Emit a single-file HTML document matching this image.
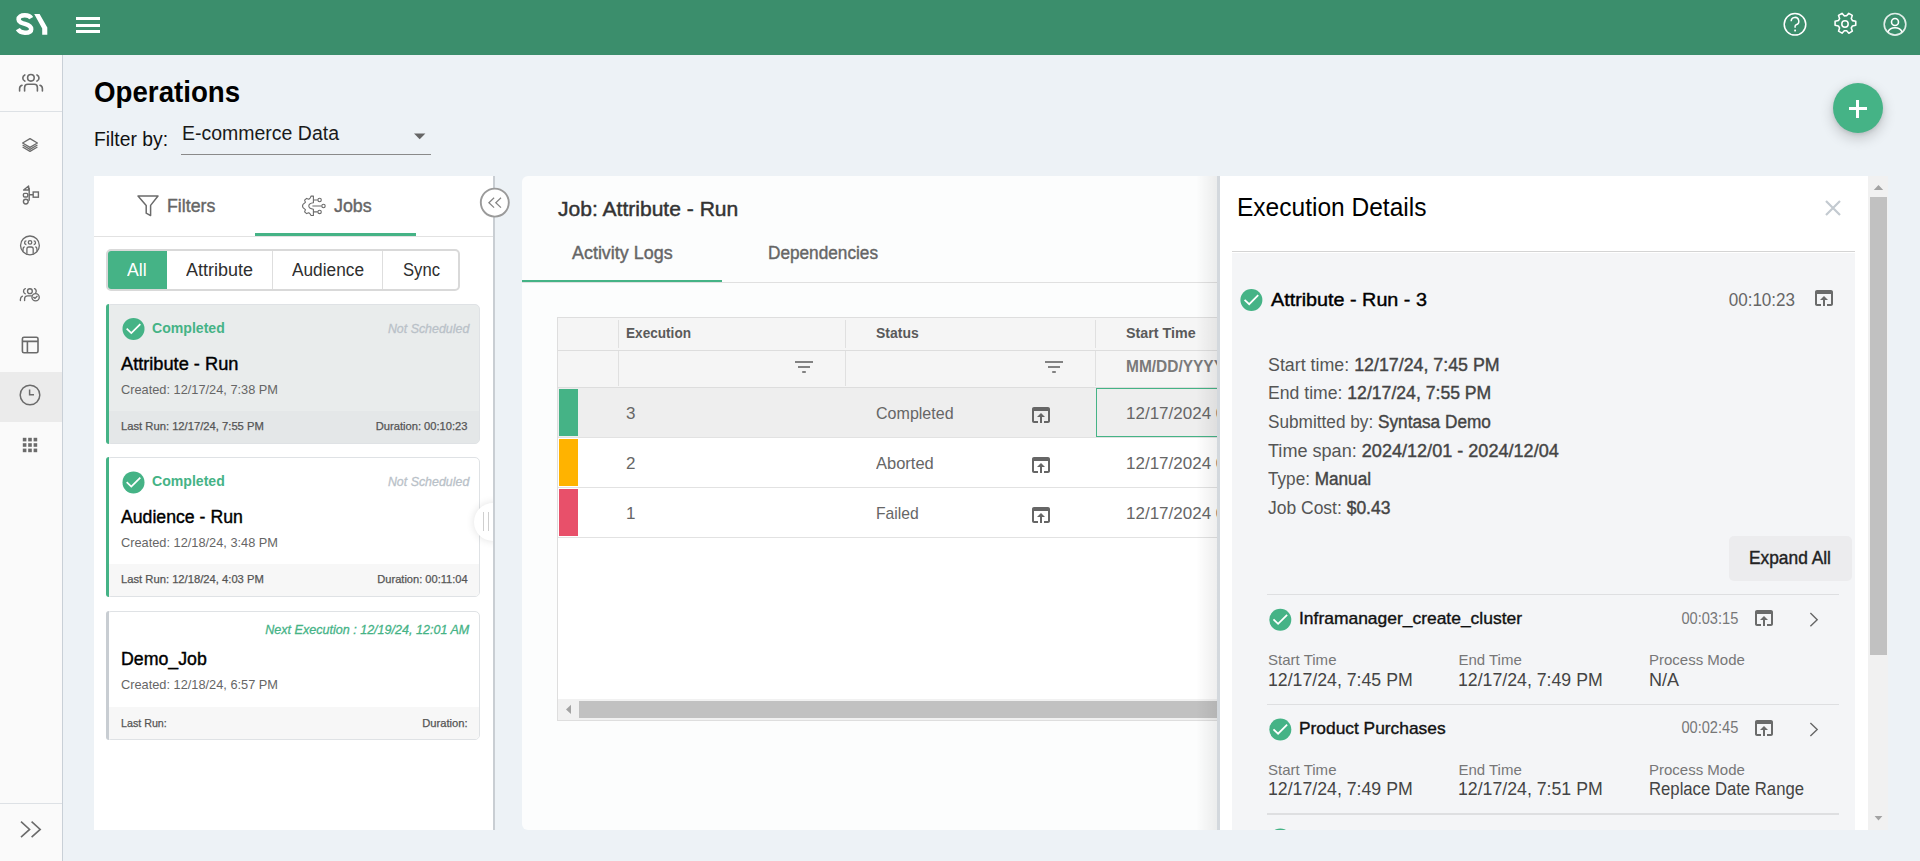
<!DOCTYPE html><html><head><meta charset="utf-8"><style>

*{box-sizing:border-box;margin:0;padding:0}
html,body{width:1920px;height:861px;overflow:hidden}
body{font-family:"Liberation Sans",sans-serif;background:#edf2f6;position:relative;color:#000}
.a{position:absolute}
.t{position:absolute;line-height:1;white-space:nowrap}
svg{position:absolute;overflow:visible}

</style></head><body>
<div class="a" style="left:0px;top:0px;width:1920px;height:55px;background:#3b8e6c"></div>
<svg style="left:0;top:0" width="60" height="55" viewBox="0 0 60 55">
<path d="M31.20 18.11 C30.00 15.90 27.60 15.35 24.80 15.35 C21.00 15.35 18.60 16.91 18.60 19.40 C18.60 22.16 21.60 22.98 24.90 23.90 C28.60 24.92 31.20 26.11 31.20 29.15 C31.20 31.91 28.40 32.64 24.90 32.64 C21.60 32.64 19.20 31.54 17.80 29.15" fill="none" stroke="#fff" stroke-width="4.5"/>
<path d="M34.2 14 L39.6 14 L47.3 27.6 L47.3 34.8 L42.2 34.8 L42.2 28.6 Z" fill="#fff"/>
</svg>
<div class="a" style="left:75.5px;top:17px;width:24px;height:3px;background:#fff"></div>
<div class="a" style="left:75.5px;top:23.5px;width:24px;height:3px;background:#fff"></div>
<div class="a" style="left:75.5px;top:30px;width:24px;height:3px;background:#fff"></div>
<svg style="left:1783px;top:12px" width="24" height="24" viewBox="0 0 24 24" fill="none" stroke="#fff" stroke-width="1.5">
<circle cx="12" cy="12.3" r="10.8"/>
<path d="M8.2 9.3 a3.8 3.8 0 1 1 5 3.5 c-0.7 .3 -1.1 .8 -1.1 1.5 v1.5"/>
<rect x="11.2" y="17.6" width="1.8" height="1.8" fill="#fff" stroke="none"/>
</svg>
<svg style="left:1833px;top:12.3px" width="24" height="24" viewBox="0 0 24 24" fill="none" stroke="#fff" stroke-width="1.5" stroke-linejoin="round">
<path transform="translate(12 12) scale(1.06) rotate(30) translate(-12 -12)" d="M10.1 1.5h3.8l.7 3.1 1.9 1.1 3-1 1.9 3.3-2.4 2.1v2.2l2.4 2.1-1.9 3.3-3-1-1.9 1.1-.7 3.1h-3.8l-.7-3.1-1.9-1.1-3 1-1.9-3.3 2.4-2.1v-2.2l-2.4-2.1 1.9-3.3 3 1 1.9-1.1z"/>
<circle cx="12" cy="12" r="3.2"/>
</svg>
<svg style="left:1883px;top:12px" width="24" height="24" viewBox="0 0 24 24" fill="none" stroke="#fff" stroke-width="1.6">
<circle cx="12" cy="12.3" r="10.8" stroke-opacity=".85"/>
<circle cx="12" cy="10" r="3.5"/>
<path d="M4.8 20.2 C6 17.2 8.6 15.7 12 15.7 C15.4 15.7 18 17.2 19.2 20.2"/>
</svg>
<div class="a" style="left:0px;top:55px;width:62px;height:806px;background:#fafafa"></div>
<div class="a" style="left:62px;top:55px;width:1.4px;height:806px;background:#c9d0d7"></div>
<div class="a" style="left:0px;top:111px;width:62px;height:1px;background:#dde1e5"></div>
<div class="a" style="left:0px;top:372px;width:62px;height:50px;background:#ebebeb"></div>
<div class="a" style="left:0px;top:803px;width:62px;height:1px;background:#dde1e5"></div>
<svg style="left:0;top:55px" width="62" height="60" fill="none" stroke="#6b6b6b" stroke-width="1.6" stroke-linecap="round">
<circle cx="30.9" cy="22.8" r="3.3"/>
<path d="M24.8 19.9 A3.4 3.4 0 0 0 24.8 26.1 M37 19.9 A3.4 3.4 0 0 1 37 26.1"/>
<path d="M24.6 36 v-3.6 a3.2 3.2 0 0 1 3.2 -3.2 h6.4 a3.2 3.2 0 0 1 3.2 3.2 v3.6"/>
<path d="M19.6 36 v-2.6 a3.4 3.4 0 0 1 2.4 -3.2 M42.4 36 v-2.6 a3.4 3.4 0 0 0 -2.4 -3.2"/>
</svg>
<svg style="left:0;top:130px" width="62" height="30" fill="none" stroke="#6b6b6b" stroke-width="1.3" stroke-linejoin="round">
<path d="M30 8.6 L37.4 13 L30 17.4 L22.6 13 Z" fill="#fafafa"/>
<path d="M22.6 15 L30 19.4 L37.4 15"/>
<path d="M22.6 17 L30 21.4 L37.4 17"/>
</svg>
<svg style="left:0;top:180px" width="62" height="30" fill="none" stroke="#6b6b6b" stroke-width="1.4">
<path d="M23.6 10 L28.6 10 L28.6 6 Z" stroke-linejoin="round"/>
<rect x="23.4" y="13.4" width="4.4" height="3.6" rx="1.2"/>
<circle cx="25.8" cy="21.6" r="2.4"/>
<path d="M29.2 7.8 V20.8 M29.2 14.8 H33"/>
<rect x="33.2" y="12" width="5.2" height="5.2"/>
</svg>
<svg style="left:0;top:225px" width="62" height="40" fill="none" stroke="#6b6b6b" stroke-width="1.3">
<circle cx="29.95" cy="20.4" r="9.4"/>
<circle cx="30.05" cy="17.4" r="1.75"/>
<path d="M26.4 15.9 A1.8 1.8 0 0 0 26.4 19.5 M33.7 15.9 A1.8 1.8 0 0 1 33.7 19.5"/>
<path d="M26.9 28.8 V24 a2 2 0 0 1 2 -2 h2.3 a2 2 0 0 1 2 2 V28.8"/>
<path d="M24.6 21.6 a3 3 0 0 0 -1.6 2.6 V26.6 M35.4 21.6 a3 3 0 0 1 1.6 2.6 V26.6"/>
</svg>
<svg style="left:0;top:275px" width="62" height="40" fill="none" stroke="#6b6b6b" stroke-width="1.35" stroke-linecap="round">
<circle cx="29.9" cy="16.15" r="2.4"/>
<path d="M25.3 13.6 A2.78 2.78 0 0 0 25.3 18.8 M34.5 13.6 A2.78 2.78 0 0 1 35.8 17.6"/>
<path d="M24.6 25.6 V23.8 a3 3 0 0 1 3 -3 H31.4"/>
<path d="M22.4 21.2 a3.5 3.5 0 0 0 -2 3 V25.6"/>
<circle cx="35.6" cy="22.25" r="3.65" fill="#fafafa"/>
<path d="M33.7 22.4 L35 23.4 L37.1 21.3"/>
</svg>
<svg style="left:0;top:330px" width="62" height="30" fill="none" stroke="#6b6b6b" stroke-width="1.6">
<rect x="22.4" y="7.2" width="15.6" height="15.6" rx="1.6"/>
<path d="M22.4 11.4 H38 M27.4 11.4 V22.8"/>
</svg>
<svg style="left:0;top:375px" width="62" height="40" fill="none" stroke="#6b6b6b" stroke-width="1.5">
<circle cx="30" cy="20" r="9.8"/>
<path d="M29.6 14.6 V19.8 H34"/>
</svg>
<svg style="left:0;top:430px" width="62" height="30" fill="#6b6b6b"><rect x="22.8" y="7.8" width="3.6" height="3.6"/><rect x="22.8" y="13.2" width="3.6" height="3.6"/><rect x="22.8" y="18.6" width="3.6" height="3.6"/><rect x="28.2" y="7.8" width="3.6" height="3.6"/><rect x="28.2" y="13.2" width="3.6" height="3.6"/><rect x="28.2" y="18.6" width="3.6" height="3.6"/><rect x="33.6" y="7.8" width="3.6" height="3.6"/><rect x="33.6" y="13.2" width="3.6" height="3.6"/><rect x="33.6" y="18.6" width="3.6" height="3.6"/></svg>
<svg style="left:0;top:815px" width="62" height="30" fill="none" stroke="#6b6b6b" stroke-width="1.6">
<path d="M21 6.6 L29.6 14.4 L21 22.2 M31.6 6.6 L40.2 14.4 L31.6 22.2"/>
</svg>
<div id="t0" class="t" style="left:94.40px;transform-origin:0 0;top:76.51px;font-size:30px;font-weight:700;color:#000;transform:scaleX(0.9231);">Operations</div>
<div id="t1" class="t" style="left:94.40px;transform-origin:0 0;top:129.07px;font-size:20px;font-weight:400;color:#111;transform:scaleX(0.9650);">Filter by:</div>
<div id="t2" class="t" style="left:182.00px;transform-origin:0 0;top:123.07px;font-size:20px;font-weight:400;color:#1a1a1a;transform:scaleX(0.9742);">E-commerce Data</div>
<div class="a" style="left:181px;top:154px;width:250px;height:1.2px;background:#8a8a8a"></div>
<svg style="left:0;top:0" width="1" height="1"><path d="M414 133.4 L425.4 133.4 L419.7 139.2 Z" fill="#666"/></svg>
<div class="a" style="left:1833px;top:83px;width:50px;height:50px;border-radius:50%;background:#45b386;box-shadow:0 5px 14px rgba(0,0,0,.2),0 1px 4px rgba(0,0,0,.1)"></div>
<div class="a" style="left:1848.5px;top:107.4px;width:18.4px;height:2.6px;background:#fff"></div>
<div class="a" style="left:1856.4px;top:99.5px;width:2.6px;height:18.4px;background:#fff"></div>
<div class="a" style="left:94px;top:176px;width:399px;height:654px;background:#fff"></div>
<div class="a" style="left:493px;top:176px;width:2.4px;height:654px;background:#c9ced3"></div>
<svg style="left:0;top:0" width="1" height="1" fill="none" stroke="#6b6b6b" stroke-width="1.5" stroke-linejoin="round">
<path d="M138 196 H158 L150.6 205.4 V215.6 L146.2 213.2 V205.4 Z"/>
</svg>
<div id="t3" class="t" style="left:167.30px;transform-origin:0 0;top:196.96px;font-size:18px;font-weight:400;color:#666;-webkit-text-stroke:0.40px #666;transform:scaleX(0.9857);">Filters</div>
<svg style="left:0;top:0" width="1" height="1" fill="none" stroke="#6b6b6b" stroke-width="1.1" stroke-linejoin="round">
<path d="M313.4 196.1 L313.4 202.8 C310.4 203.2 308.8 204.4 308.8 206.0 C308.8 207.6 310.4 208.8 313.4 209.3 L313.4 215.5 L311.1 215.5 L310.3 214.2 L308.8 212.7 L306.6 213.6 L304.6 211.9 L305.4 209.7 L303.0 207.6 L302.5 206.0 L303.0 204.4 L305.4 202.3 L304.6 200.1 L306.6 198.4 L308.8 199.3 L310.3 197.8 L311.1 196.1 Z"/>
<path d="M313.4 200 H317.8 M312.4 206 H321.6 M313.4 211.9 H317.8"/>
<circle cx="319.6" cy="200" r="1.7"/>
<circle cx="323.5" cy="206" r="1.7"/>
<circle cx="319.6" cy="211.9" r="1.7"/>
</svg>
<div id="t4" class="t" style="left:333.80px;transform-origin:0 0;top:196.96px;font-size:18px;font-weight:400;color:#666;-webkit-text-stroke:0.40px #666;transform:scaleX(0.9913);">Jobs</div>
<div class="a" style="left:94px;top:236px;width:399px;height:1px;background:#e2e2e2"></div>
<div class="a" style="left:255px;top:233px;width:161px;height:3px;background:#45b386"></div>
<div class="a" style="left:106px;top:249px;width:353.5px;height:42px;border:2px solid #d9d9d9;border-radius:5px;background:#fff"></div>
<div class="a" style="left:108px;top:251px;width:58.5px;height:38px;background:#45b386;border-radius:3px 0 0 3px"></div>
<div class="a" style="left:272.3px;top:251px;width:1px;height:38px;background:#dedede"></div>
<div class="a" style="left:382.3px;top:251px;width:1px;height:38px;background:#dedede"></div>
<div id="t5" class="t" style="left:127.00px;transform-origin:0 0;top:261.06px;font-size:18px;font-weight:400;color:#fff;transform:scaleX(0.9792);">All</div>
<div id="t6" class="t" style="left:185.80px;transform-origin:0 0;top:261.06px;font-size:18px;font-weight:400;color:#2e2e2e;transform:scaleX(0.9978);">Attribute</div>
<div id="t7" class="t" style="left:291.50px;transform-origin:0 0;top:261.06px;font-size:18px;font-weight:400;color:#2e2e2e;transform:scaleX(0.9592);">Audience</div>
<div id="t8" class="t" style="left:402.50px;transform-origin:0 0;top:261.06px;font-size:18px;font-weight:400;color:#2e2e2e;transform:scaleX(0.9243);">Sync</div>
<div class="a" style="left:106px;top:303.5px;width:374px;height:140px;background:#e9ecec;border:1px solid #dfe2e5;border-radius:5px;overflow:hidden"></div>
<div class="a" style="left:107px;top:410.5px;width:372px;height:32px;background:#e4e7e8;border-radius:0 0 4px 4px"></div>
<div class="a" style="left:106px;top:303.5px;width:3.2px;height:140px;background:#45b386;border-radius:5px 0 0 5px"></div>
<svg style="left:0;top:0" width="1" height="1"><circle cx="133.5" cy="328.9" r="11" fill="#45b386"/>
<path d="M126.68 328.68 L131.30 333.08 L140.32 324.06" fill="none" stroke="#fff" stroke-width="1.76"/></svg>
<div id="t9" class="t" style="left:152.20px;transform-origin:0 0;top:319.70px;font-size:15px;font-weight:700;color:#45b386;transform:scaleX(0.9392);">Completed</div>
<div id="t10" class="t" style="right:1450.80px;transform-origin:100% 0;top:321.70px;font-size:13px;font-weight:400;color:#b9c1c8;-webkit-text-stroke:0.29px #b9c1c8;font-style:italic;transform:scaleX(0.9545);">Not Scheduled</div>
<div id="t11" class="t" style="left:121.20px;transform-origin:0 0;top:354.96px;font-size:18px;font-weight:400;color:#000;-webkit-text-stroke:0.40px #000;transform:scaleX(1.0115);">Attribute - Run</div>
<div id="t12" class="t" style="left:121.20px;transform-origin:0 0;top:382.60px;font-size:13px;font-weight:400;color:#666;transform:scaleX(0.9830);">Created: 12/17/24, 7:38 PM</div>
<div id="t13" class="t" style="left:121.20px;transform-origin:0 0;top:421.19px;font-size:11px;font-weight:400;color:#555;-webkit-text-stroke:0.25px #555;transform:scaleX(1.0197);">Last Run: 12/17/24, 7:55 PM</div>
<div id="t14" class="t" style="right:1452.60px;transform-origin:100% 0;top:421.19px;font-size:11px;font-weight:400;color:#555;-webkit-text-stroke:0.25px #555;transform:scaleX(1.0142);">Duration: 00:10:23</div>
<div class="a" style="left:106px;top:457px;width:374px;height:139.5px;background:#fff;border:1px solid #dfe2e5;border-radius:5px;overflow:hidden"></div>
<div class="a" style="left:107px;top:563.5px;width:372px;height:32px;background:#f7f7f7;border-radius:0 0 4px 4px"></div>
<div class="a" style="left:106px;top:457px;width:3.2px;height:139.5px;background:#45b386;border-radius:5px 0 0 5px"></div>
<svg style="left:0;top:0" width="1" height="1"><circle cx="133.5" cy="482.4" r="11" fill="#45b386"/>
<path d="M126.68 482.18 L131.30 486.58 L140.32 477.56" fill="none" stroke="#fff" stroke-width="1.76"/></svg>
<div id="t15" class="t" style="left:152.20px;transform-origin:0 0;top:473.20px;font-size:15px;font-weight:700;color:#45b386;transform:scaleX(0.9392);">Completed</div>
<div id="t16" class="t" style="right:1450.80px;transform-origin:100% 0;top:475.20px;font-size:13px;font-weight:400;color:#b9c1c8;-webkit-text-stroke:0.29px #b9c1c8;font-style:italic;transform:scaleX(0.9545);">Not Scheduled</div>
<div id="t17" class="t" style="left:121.20px;transform-origin:0 0;top:508.46px;font-size:18px;font-weight:400;color:#000;-webkit-text-stroke:0.40px #000;transform:scaleX(0.9816);">Audience - Run</div>
<div id="t18" class="t" style="left:121.20px;transform-origin:0 0;top:536.10px;font-size:13px;font-weight:400;color:#666;transform:scaleX(0.9830);">Created: 12/18/24, 3:48 PM</div>
<div id="t19" class="t" style="left:121.20px;transform-origin:0 0;top:574.19px;font-size:11px;font-weight:400;color:#555;-webkit-text-stroke:0.25px #555;transform:scaleX(1.0197);">Last Run: 12/18/24, 4:03 PM</div>
<div id="t20" class="t" style="right:1452.60px;transform-origin:100% 0;top:574.19px;font-size:11px;font-weight:400;color:#555;-webkit-text-stroke:0.25px #555;transform:scaleX(1.0078);">Duration: 00:11:04</div>
<div class="a" style="left:106px;top:610.5px;width:374px;height:129.5px;background:#fff;border:1px solid #dfe2e5;border-radius:5px;overflow:hidden"></div>
<div class="a" style="left:107px;top:707.0px;width:372px;height:32px;background:#f7f7f7;border-radius:0 0 4px 4px"></div>
<div class="a" style="left:106px;top:610.5px;width:3.2px;height:129.5px;background:#c8cdd2;border-radius:5px 0 0 5px"></div>
<div id="t21" class="t" style="right:1450.80px;transform-origin:100% 0;top:622.90px;font-size:13px;font-weight:400;color:#45b386;-webkit-text-stroke:0.29px #45b386;font-style:italic;transform:scaleX(0.9656);">Next Execution : 12/19/24, 12:01 AM</div>
<div id="t22" class="t" style="left:121.20px;transform-origin:0 0;top:650.26px;font-size:18px;font-weight:400;color:#000;-webkit-text-stroke:0.40px #000;transform:scaleX(0.9857);">Demo_Job</div>
<div id="t23" class="t" style="left:121.20px;transform-origin:0 0;top:677.90px;font-size:13px;font-weight:400;color:#666;transform:scaleX(0.9830);">Created: 12/18/24, 6:57 PM</div>
<div id="t24" class="t" style="left:121.20px;transform-origin:0 0;top:717.69px;font-size:11px;font-weight:400;color:#555;-webkit-text-stroke:0.25px #555;transform:scaleX(0.9725);">Last Run:</div>
<div id="t25" class="t" style="right:1452.60px;transform-origin:100% 0;top:717.69px;font-size:11px;font-weight:400;color:#555;-webkit-text-stroke:0.25px #555;transform:scaleX(1.0170);">Duration:</div>
<div class="a" style="left:474px;top:502.5px;width:38px;height:38px;border-radius:50%;background:#fff;box-shadow:0 0 8px rgba(0,0,0,.12);clip-path:inset(-10px 19px -10px -10px)"></div>
<div class="a" style="left:483px;top:512px;width:1.3px;height:19px;background:#cfcfcf"></div>
<div class="a" style="left:488px;top:512px;width:1.3px;height:19px;background:#cfcfcf"></div>
<div class="a" style="left:493px;top:176px;width:2.4px;height:654px;background:#c9ced3"></div>
<svg style="left:0;top:0" width="1" height="1">
<circle cx="494.8" cy="202.6" r="14" fill="#fff" stroke="#9a9a9a" stroke-width="1.9"/>
<path d="M494.1 197.8 L488.9 202.7 L494.1 207.6 M501 197.8 L495.8 202.7 L501 207.6" fill="none" stroke="#858585" stroke-width="1.25"/>
</svg>
<div class="a" style="left:522px;top:176px;width:720px;height:654px;background:#fcfdfd;border-radius:6px 0 0 6px"></div>
<div id="t26" class="t" style="left:557.70px;transform-origin:0 0;top:199.27px;font-size:20px;font-weight:400;color:#333;-webkit-text-stroke:0.44px #333;transform:scaleX(1.0531);">Job: Attribute - Run</div>
<div id="t27" class="t" style="left:572.00px;transform-origin:0 0;top:243.76px;font-size:18px;font-weight:400;color:#666;-webkit-text-stroke:0.40px #666;transform:scaleX(0.9956);">Activity Logs</div>
<div id="t28" class="t" style="left:767.50px;transform-origin:0 0;top:243.76px;font-size:18px;font-weight:400;color:#666;-webkit-text-stroke:0.40px #666;transform:scaleX(0.9557);">Dependencies</div>
<div class="a" style="left:522px;top:282px;width:720px;height:1px;background:#e0e0e0"></div>
<div class="a" style="left:522px;top:280px;width:200px;height:2px;background:#45b386"></div>
<div class="a" style="left:557px;top:317px;width:680px;height:404px;background:#fff;border:1px solid #dedede"></div>
<div class="a" style="left:558px;top:318px;width:680px;height:70px;background:#f5f5f5"></div>
<div class="a" style="left:558px;top:350px;width:680px;height:1px;background:#dddddd"></div>
<div class="a" style="left:558px;top:387px;width:680px;height:1px;background:#dddddd"></div>
<div class="a" style="left:618px;top:319.5px;width:1px;height:28px;background:#e0e0e0"></div>
<div class="a" style="left:618px;top:351px;width:1px;height:35px;background:#e0e0e0"></div>
<div class="a" style="left:845px;top:319.5px;width:1px;height:28px;background:#e0e0e0"></div>
<div class="a" style="left:845px;top:351px;width:1px;height:35px;background:#e0e0e0"></div>
<div class="a" style="left:1095px;top:319.5px;width:1px;height:28px;background:#e0e0e0"></div>
<div class="a" style="left:1095px;top:351px;width:1px;height:35px;background:#e0e0e0"></div>
<div id="t29" class="t" style="left:626.00px;transform-origin:0 0;top:324.90px;font-size:15px;font-weight:700;color:#5a5a5a;transform:scaleX(0.9067);">Execution</div>
<div id="t30" class="t" style="left:875.70px;transform-origin:0 0;top:324.90px;font-size:15px;font-weight:700;color:#5a5a5a;transform:scaleX(0.9314);">Status</div>
<div id="t31" class="t" style="left:1126.00px;transform-origin:0 0;top:324.90px;font-size:15px;font-weight:700;color:#5a5a5a;transform:scaleX(0.9536);">Start Time</div>
<div id="t32" class="t" style="left:1126.00px;transform-origin:0 0;top:359.26px;font-size:16px;font-weight:700;color:#7a7a7a;transform:scaleX(0.9670);">MM/DD/YYYY</div>
<svg style="left:0;top:0" width="1" height="1" fill="#666"><rect x="795" y="361.2" width="18" height="1.6"/><rect x="798" y="366.2" width="12" height="1.6"/><rect x="802.2" y="371.2" width="3.6" height="1.6"/></svg>
<svg style="left:0;top:0" width="1" height="1" fill="#666"><rect x="1045" y="361.2" width="18" height="1.6"/><rect x="1048" y="366.2" width="12" height="1.6"/><rect x="1052.2" y="371.2" width="3.6" height="1.6"/></svg>
<div class="a" style="left:558px;top:388px;width:680px;height:49px;background:#eeeeee"></div>
<div class="a" style="left:558px;top:437px;width:680px;height:1px;background:#e2e2e2"></div>
<div class="a" style="left:558px;top:487px;width:680px;height:1px;background:#e2e2e2"></div>
<div class="a" style="left:558px;top:537px;width:680px;height:1px;background:#e2e2e2"></div>
<div class="a" style="left:559px;top:389px;width:19px;height:47px;background:#45b386"></div>
<div class="a" style="left:559px;top:439px;width:19px;height:47px;background:#ffb300"></div>
<div class="a" style="left:559px;top:489px;width:19px;height:47px;background:#e8506a"></div>
<div id="t33" class="t" style="left:626.00px;transform-origin:0 0;top:404.61px;font-size:17px;font-weight:400;color:#666;">3</div>
<div id="t34" class="t" style="left:875.70px;transform-origin:0 0;top:404.61px;font-size:17px;font-weight:400;color:#666;transform:scaleX(0.9438);">Completed</div>
<svg style="left:1029.1px;top:402.8px" width="24.0" height="24.0" viewBox="0 0 24 24" fill="#666"><path d="M19 4H5c-1.11 0-2 .9-2 2v12c0 1.1.89 2 2 2h4v-2H5V8h14v10h-4v2h4c1.1 0 2-.9 2-2V6c0-1.1-.89-2-2-2zm-7 6l-4 4h3v6h2v-6h3l-4-4z"/></svg>
<div id="t35" class="t" style="left:1126.00px;transform-origin:0 0;top:404.61px;font-size:17px;font-weight:400;color:#666;">12/17/2024 07:45 PM</div>
<div id="t36" class="t" style="left:626.00px;transform-origin:0 0;top:454.61px;font-size:17px;font-weight:400;color:#666;">2</div>
<div id="t37" class="t" style="left:875.70px;transform-origin:0 0;top:454.61px;font-size:17px;font-weight:400;color:#666;transform:scaleX(0.9707);">Aborted</div>
<svg style="left:1029.1px;top:452.8px" width="24.0" height="24.0" viewBox="0 0 24 24" fill="#666"><path d="M19 4H5c-1.11 0-2 .9-2 2v12c0 1.1.89 2 2 2h4v-2H5V8h14v10h-4v2h4c1.1 0 2-.9 2-2V6c0-1.1-.89-2-2-2zm-7 6l-4 4h3v6h2v-6h3l-4-4z"/></svg>
<div id="t38" class="t" style="left:1126.00px;transform-origin:0 0;top:454.61px;font-size:17px;font-weight:400;color:#666;">12/17/2024 07:45 PM</div>
<div id="t39" class="t" style="left:626.00px;transform-origin:0 0;top:504.61px;font-size:17px;font-weight:400;color:#666;">1</div>
<div id="t40" class="t" style="left:875.70px;transform-origin:0 0;top:504.61px;font-size:17px;font-weight:400;color:#666;transform:scaleX(0.9242);">Failed</div>
<svg style="left:1029.1px;top:502.8px" width="24.0" height="24.0" viewBox="0 0 24 24" fill="#666"><path d="M19 4H5c-1.11 0-2 .9-2 2v12c0 1.1.89 2 2 2h4v-2H5V8h14v10h-4v2h4c1.1 0 2-.9 2-2V6c0-1.1-.89-2-2-2zm-7 6l-4 4h3v6h2v-6h3l-4-4z"/></svg>
<div id="t41" class="t" style="left:1126.00px;transform-origin:0 0;top:504.61px;font-size:17px;font-weight:400;color:#666;">12/17/2024 07:45 PM</div>
<div class="a" style="left:1096px;top:388px;width:130px;height:49px;border:1px solid #45b386"></div>
<div class="a" style="left:558px;top:699px;width:680px;height:21px;background:#f1f1f1"></div>
<div class="a" style="left:579px;top:701px;width:640px;height:17px;background:#c1c1c1"></div>
<svg style="left:0;top:0" width="1" height="1"><path d="M571 704.8 V714 L566 709.4 Z" fill="#a3a3a3"/></svg>
<div class="a" style="left:557px;top:720px;width:680px;height:1px;background:#dedede"></div>
<div class="a" style="left:1196px;top:176px;width:21px;height:654px;background:linear-gradient(to right,rgba(0,0,0,0),rgba(0,0,0,.065))"></div>
<div class="a" style="left:1217px;top:176px;width:3px;height:654px;background:#d3d8dd"></div>
<div class="a" style="left:1220px;top:176px;width:648px;height:654px;background:#fff"></div>
<div id="t42" class="t" style="left:1237.00px;transform-origin:0 0;top:194.19px;font-size:26px;font-weight:400;color:#000;transform:scaleX(0.9433);">Execution Details</div>
<svg style="left:0;top:0" width="1" height="1"><path d="M1826 201 L1840 215 M1840 201 L1826 215" stroke="#c3cad0" stroke-width="2.2"/></svg>
<div class="a" style="left:1232px;top:251px;width:623px;height:1.2px;background:#d4d4d4"></div>
<div class="a" style="left:1232px;top:252.5px;width:623px;height:578px;background:#f4f5f7"></div>
<svg style="left:0;top:0" width="1" height="1"><circle cx="1251.4" cy="300" r="11" fill="#45b386"/>
<path d="M1244.58 299.78 L1249.20 304.18 L1258.22 295.16" fill="none" stroke="#fff" stroke-width="1.76"/></svg>
<div id="t43" class="t" style="left:1270.60px;transform-origin:0 0;top:289.82px;font-size:19px;font-weight:400;color:#000;-webkit-text-stroke:0.42px #000;transform:scaleX(1.0397);">Attribute - Run - 3</div>
<div id="t44" class="t" style="right:125.20px;transform-origin:100% 0;top:290.76px;font-size:18px;font-weight:400;color:#666;transform:scaleX(0.9475);">00:10:23</div>
<svg style="left:1812px;top:286px" width="24.0" height="24.0" viewBox="0 0 24 24" fill="#6a6b6b"><path d="M19 4H5c-1.11 0-2 .9-2 2v12c0 1.1.89 2 2 2h4v-2H5V8h14v10h-4v2h4c1.1 0 2-.9 2-2V6c0-1.1-.89-2-2-2zm-7 6l-4 4h3v6h2v-6h3l-4-4z"/></svg>
<div id="t45" class="t" style="left:1267.70px;transform-origin:0 0;top:355.66px;font-size:18px;font-weight:400;color:#555;transform:scaleX(0.9896);">Start time: <span style="-webkit-text-stroke:0.4px #444;color:#444">12/17/24, 7:45 PM</span></div>
<div id="t46" class="t" style="left:1267.70px;transform-origin:0 0;top:384.28px;font-size:18px;font-weight:400;color:#555;transform:scaleX(0.9787);">End time: <span style="-webkit-text-stroke:0.4px #444;color:#444">12/17/24, 7:55 PM</span></div>
<div id="t47" class="t" style="left:1267.70px;transform-origin:0 0;top:412.90px;font-size:18px;font-weight:400;color:#555;transform:scaleX(0.9561);">Submitted by: <span style="-webkit-text-stroke:0.4px #444;color:#444">Syntasa Demo</span></div>
<div id="t48" class="t" style="left:1267.70px;transform-origin:0 0;top:441.52px;font-size:18px;font-weight:400;color:#555;transform:scaleX(1.0043);">Time span: <span style="-webkit-text-stroke:0.4px #444;color:#444">2024/12/01 - 2024/12/04</span></div>
<div id="t49" class="t" style="left:1267.70px;transform-origin:0 0;top:470.14px;font-size:18px;font-weight:400;color:#555;transform:scaleX(0.9530);">Type: <span style="-webkit-text-stroke:0.4px #444;color:#444">Manual</span></div>
<div id="t50" class="t" style="left:1267.70px;transform-origin:0 0;top:498.76px;font-size:18px;font-weight:400;color:#555;transform:scaleX(0.9707);">Job Cost: <span style="-webkit-text-stroke:0.4px #444;color:#444">$0.43</span></div>
<div class="a" style="left:1729px;top:536px;width:123px;height:45px;background:#ececee;border-radius:5px"></div>
<div id="t51" class="t" style="left:1749.40px;transform-origin:0 0;top:549.34px;font-size:18.5px;font-weight:400;color:#222;-webkit-text-stroke:0.41px #222;transform:scaleX(0.9367);">Expand All</div>
<div class="a" style="left:1267px;top:593.7px;width:572px;height:1.2px;background:#dedfe1"></div>
<svg style="left:0;top:0" width="1" height="1"><circle cx="1280.3" cy="619.7" r="11" fill="#45b386"/>
<path d="M1273.48 619.48 L1278.10 623.88 L1287.12 614.86" fill="none" stroke="#fff" stroke-width="1.76"/></svg>
<div id="t52" class="t" style="left:1299.40px;transform-origin:0 0;top:610.11px;font-size:17px;font-weight:400;color:#111;-webkit-text-stroke:0.37px #111;transform:scaleX(1.0260);">Inframanager_create_cluster</div>
<div id="t53" class="t" style="right:181.50px;transform-origin:100% 0;top:610.56px;font-size:16px;font-weight:400;color:#777;transform:scaleX(0.9136);">00:03:15</div>
<svg style="left:1752px;top:605.9000000000001px" width="24.0" height="24.0" viewBox="0 0 24 24" fill="#6a6b6b"><path d="M19 4H5c-1.11 0-2 .9-2 2v12c0 1.1.89 2 2 2h4v-2H5V8h14v10h-4v2h4c1.1 0 2-.9 2-2V6c0-1.1-.89-2-2-2zm-7 6l-4 4h3v6h2v-6h3l-4-4z"/></svg>
<svg style="left:0;top:0" width="1" height="1"><path d="M1810.4 613.1 L1817.2 619.7 L1810.4 626.3000000000001" fill="none" stroke="#666" stroke-width="1.4"/></svg>
<div id="t54" class="t" style="left:1267.90px;transform-origin:0 0;top:652.10px;font-size:15px;font-weight:400;color:#777;transform:scaleX(1.0021);">Start Time</div>
<div id="t55" class="t" style="left:1458.40px;transform-origin:0 0;top:652.10px;font-size:15px;font-weight:400;color:#777;">End Time</div>
<div id="t56" class="t" style="left:1649.00px;transform-origin:0 0;top:652.10px;font-size:15px;font-weight:400;color:#777;">Process Mode</div>
<div id="t57" class="t" style="left:1267.90px;transform-origin:0 0;top:670.66px;font-size:18px;font-weight:400;color:#444;transform:scaleX(0.9836);">12/17/24, 7:45 PM</div>
<div id="t58" class="t" style="left:1458.40px;transform-origin:0 0;top:670.66px;font-size:18px;font-weight:400;color:#444;transform:scaleX(0.9836);">12/17/24, 7:49 PM</div>
<div id="t59" class="t" style="left:1649.00px;transform-origin:0 0;top:670.66px;font-size:18px;font-weight:400;color:#444;">N/A</div>
<div class="a" style="left:1267px;top:703.5px;width:572px;height:1.2px;background:#dedfe1"></div>
<svg style="left:0;top:0" width="1" height="1"><circle cx="1280.3" cy="729.5" r="11" fill="#45b386"/>
<path d="M1273.48 729.28 L1278.10 733.68 L1287.12 724.66" fill="none" stroke="#fff" stroke-width="1.76"/></svg>
<div id="t60" class="t" style="left:1299.40px;transform-origin:0 0;top:719.91px;font-size:17px;font-weight:400;color:#111;-webkit-text-stroke:0.37px #111;transform:scaleX(1.0206);">Product Purchases</div>
<div id="t61" class="t" style="right:181.50px;transform-origin:100% 0;top:720.36px;font-size:16px;font-weight:400;color:#777;transform:scaleX(0.9136);">00:02:45</div>
<svg style="left:1752px;top:715.7px" width="24.0" height="24.0" viewBox="0 0 24 24" fill="#6a6b6b"><path d="M19 4H5c-1.11 0-2 .9-2 2v12c0 1.1.89 2 2 2h4v-2H5V8h14v10h-4v2h4c1.1 0 2-.9 2-2V6c0-1.1-.89-2-2-2zm-7 6l-4 4h3v6h2v-6h3l-4-4z"/></svg>
<svg style="left:0;top:0" width="1" height="1"><path d="M1810.4 722.9 L1817.2 729.5 L1810.4 736.1" fill="none" stroke="#666" stroke-width="1.4"/></svg>
<div id="t62" class="t" style="left:1267.90px;transform-origin:0 0;top:761.90px;font-size:15px;font-weight:400;color:#777;transform:scaleX(1.0021);">Start Time</div>
<div id="t63" class="t" style="left:1458.40px;transform-origin:0 0;top:761.90px;font-size:15px;font-weight:400;color:#777;">End Time</div>
<div id="t64" class="t" style="left:1649.00px;transform-origin:0 0;top:761.90px;font-size:15px;font-weight:400;color:#777;">Process Mode</div>
<div id="t65" class="t" style="left:1267.90px;transform-origin:0 0;top:780.46px;font-size:18px;font-weight:400;color:#444;transform:scaleX(0.9836);">12/17/24, 7:49 PM</div>
<div id="t66" class="t" style="left:1458.40px;transform-origin:0 0;top:780.46px;font-size:18px;font-weight:400;color:#444;transform:scaleX(0.9836);">12/17/24, 7:51 PM</div>
<div id="t67" class="t" style="left:1649.00px;transform-origin:0 0;top:780.46px;font-size:18px;font-weight:400;color:#444;transform:scaleX(0.9275);">Replace Date Range</div>
<div class="a" style="left:1267px;top:813.4px;width:572px;height:1.2px;background:#dedfe1"></div>
<svg style="left:0;top:0" width="1" height="1"><circle cx="1280.3" cy="839.4" r="11" fill="#45b386"/></svg>
<div class="a" style="left:94px;top:830px;width:1826px;height:31px;background:#edf2f6"></div>
<div class="a" style="left:1868px;top:176px;width:20px;height:654px;background:#f1f1f1"></div>
<div class="a" style="left:1870px;top:197px;width:17px;height:457.6px;background:#c1c1c1"></div>
<svg style="left:0;top:0" width="1" height="1"><path d="M1873.8 190 H1883.2 L1878.5 185 Z M1874.6 816 H1882.4 L1878.5 820.4 Z" fill="#a3a3a3"/></svg>
</body></html>
